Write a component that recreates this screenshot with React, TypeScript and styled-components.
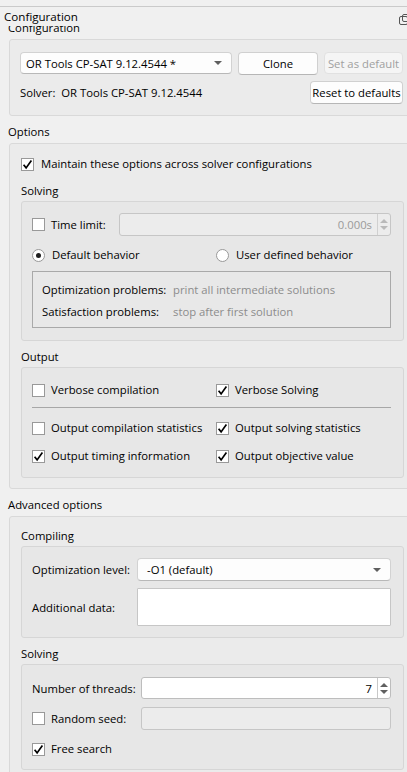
import React from 'react';
import styled, { createGlobalStyle } from 'styled-components';

const GlobalStyle = createGlobalStyle`
  html, body {
    margin: 0;
    padding: 0;
    background: #f0f0f0;
  }
  body {
    font-family: 'Open Sans', 'Noto Sans', sans-serif;
    font-size: 11.3px;
    color: #000;
    white-space: nowrap;
  }
  * {
    box-sizing: border-box;
  }
`;

const Dock = styled.div`
  width: 407px;
  height: 772px;
  overflow: hidden;
  display: flex;
  flex-direction: column;
  padding-top: 6px;
`;

const TitleBar = styled.div`
  height: 20px;
  border-top: 1px solid #cacaca;
  display: flex;
  justify-content: space-between;
  align-items: flex-start;
  padding: 2px 0 0 4px;
  line-height: 16px;
  font-size: 11.6px;
  position: relative;
  z-index: 1;
  .float_icon {
    margin-top: 5px;
    margin-right: -4px;
  }
`;

const Viewport = styled.div`
  flex: 1;
  overflow: hidden;
`;

const Content = styled.div`
  width: 420px;
  margin-top: -14px;
  padding-left: 8px;
`;

const GroupTitle = styled.div`
  height: 16px;
  line-height: 16px;
  margin: 8px 0 3px;
`;

const GroupBox = styled.div<{ $pad: string }>`
  margin-left: 1px;
  width: 407px;
  background: #ebebeb;
  border: 1px solid #d9d9d9;
  border-radius: 3px;
  padding: ${(p) => p.$pad};
  display: flex;
  flex-direction: column;
`;

const SubTitle = styled.div`
  height: 16px;
  line-height: 16px;
  margin: 8px 0 2px;
  &:first-child {
    margin-top: 0;
  }
`;

const SubBox = styled.div<{ $pad: string }>`
  background: #e7e7e7;
  border: 1px solid #d6d6d6;
  border-radius: 3px;
  padding: ${(p) => p.$pad};
  display: flex;
  flex-direction: column;
`;

const Row = styled.div<{ $gap?: number }>`
  display: flex;
  align-items: center;
  gap: ${(p) => p.$gap ?? 6}px;
`;

const ButtonRow = styled(Row)`
  height: 22px;
`;

const SolverRow = styled(Row)`
  margin-top: 7px;
  justify-content: space-between;
`;

const Combo = styled.div<{ $w?: number }>`
  width: ${(p) => (p.$w ? `${p.$w}px` : 'auto')};
  flex: ${(p) => (p.$w ? 'none' : '1')};
  height: ${(p) => (p.$w ? 22 : 23)}px;
  background: #fdfdfd;
  border: 1px solid #d2d2d2;
  border-bottom-color: #b8b8b8;
  border-radius: 4px;
  display: flex;
  align-items: center;
  justify-content: space-between;
  padding: 0 9px 0 ${(p) => (p.$w ? 5 : 9)}px;
  &::after {
    content: '';
    border-left: 4px solid transparent;
    border-right: 4px solid transparent;
    border-top: 4px solid #5f5f5f;
  }
`;

const Button = styled.div<{ $w: number; $disabled?: boolean }>`
  width: ${(p) => p.$w}px;
  height: ${(p) => (p.$disabled ? 22 : 23)}px;
  background: ${(p) => (p.$disabled ? '#f5f5f5' : '#fdfdfd')};
  color: ${(p) => (p.$disabled ? '#a0a0a0' : '#000')};
  border: 1px solid ${(p) => (p.$disabled ? '#e1e1e1' : '#d0d0d0')};
  border-bottom-color: ${(p) => (p.$disabled ? '#e1e1e1' : '#b6b6b6')};
  border-radius: 4px;
  display: flex;
  align-items: center;
  justify-content: center;
  flex: none;
`;

const CheckLabel = styled.label<{ $gap?: number }>`
  display: flex;
  align-items: center;
  gap: ${(p) => p.$gap ?? 6}px;
  height: 16px;
  line-height: 16px;
`;

const CheckSquare = styled.span`
  width: 13px;
  height: 13px;
  flex: none;
  background: #fff;
  border: 1px solid #999;
  display: flex;
  align-items: center;
  justify-content: center;
`;

const RadioCircle = styled.span<{ $on?: boolean }>`
  width: 13px;
  height: 13px;
  flex: none;
  border-radius: 50%;
  background: #fff;
  border: 1px solid #999;
  display: flex;
  align-items: center;
  justify-content: center;
  &::after {
    content: '';
    width: 5px;
    height: 5px;
    border-radius: 50%;
    background: ${(p) => (p.$on ? '#1f1f1f' : 'transparent')};
  }
`;

const SpinBox = styled.div<{ $disabled?: boolean }>`
  flex: 1;
  height: ${(p) => (p.$disabled ? 23 : 22)}px;
  background: ${(p) => (p.$disabled ? '#ececec' : '#fff')};
  border: 1px solid ${(p) => (p.$disabled ? '#c6c6c6' : '#bdbdbd')};
  border-radius: 3px;
  display: flex;
  align-items: center;
  color: ${(p) => (p.$disabled ? '#9a9a9a' : '#000')};
  .value {
    flex: 1;
    text-align: right;
    padding-right: 5px;
  }
  .arrows {
    width: 13px;
    height: 100%;
    border-left: 1px solid ${(p) => (p.$disabled ? '#d0d0d0' : '#c8c8c8')};
    display: flex;
    flex-direction: column;
    align-items: center;
    justify-content: center;
    gap: 3px;
  }
  .up,
  .down {
    border-left: 4px solid transparent;
    border-right: 4px solid transparent;
  }
  .up {
    border-bottom: 4px solid ${(p) => (p.$disabled ? '#b9b9b9' : '#606060')};
  }
  .down {
    border-top: 4px solid ${(p) => (p.$disabled ? '#b9b9b9' : '#606060')};
  }
`;

const Field = styled.div<{ $h: number; $disabled?: boolean }>`
  flex: 1;
  height: ${(p) => p.$h}px;
  background: ${(p) => (p.$disabled ? '#ececec' : '#fff')};
  border: 1px solid #c6c6c6;
  border-radius: ${(p) => (p.$disabled ? 3 : 1)}px;
`;

const TimeRow = styled(Row)`
  height: 23px;
  gap: 0;
  .check_col {
    width: 87px;
  }
`;

const RadioGrid = styled.div`
  display: grid;
  grid-template-columns: 184px 1fr;
  margin-top: 11px;
`;

const BehaviorBox = styled.div`
  margin-top: 8px;
  border: 1px solid #a9a9a9;
  background: #e8e8e8;
  padding: 10px 0 7px 9px;
  display: grid;
  grid-template-columns: 131px 1fr;
  row-gap: 6px;
  line-height: 16px;
  .hint {
    color: #8c8c8c;
  }
`;

const CheckGrid = styled.div<{ $gap: number }>`
  display: grid;
  grid-template-columns: 184px 1fr;
  row-gap: ${(p) => p.$gap}px;
`;

const Separator = styled.hr`
  border: none;
  border-top: 1px solid #a7a7a7;
  margin: 9px 0 12px;
  height: 0;
`;

const FormGrid = styled.div<{ $label: number; $gap: number }>`
  display: grid;
  grid-template-columns: ${(p) => p.$label}px 1fr;
  row-gap: ${(p) => p.$gap}px;
  align-items: center;
`;

const FreeSearchRow = styled.div`
  margin-top: 11px;
`;

const Tick = () => (
  <svg width='11' height='11' viewBox='0 0 11 11'>
    <path d='M1.6 5.8 L4.1 8.9 L9.4 1.6' fill='none' stroke='#000' strokeWidth='1.7' />
  </svg>
);

const Check = ({ label, on, gap }: { label: string; on?: boolean; gap?: number }) => (
  <CheckLabel $gap={gap}>
    <CheckSquare>{on && <Tick />}</CheckSquare>
    <span>{label}</span>
  </CheckLabel>
);

const Radio = ({ label, on }: { label: string; on?: boolean }) => (
  <CheckLabel $gap={7}>
    <RadioCircle $on={on} />
    <span>{label}</span>
  </CheckLabel>
);

const Spin = ({ value, disabled }: { value: string; disabled?: boolean }) => (
  <SpinBox $disabled={disabled}>
    <span className='value'>{value}</span>
    <span className='arrows'>
      <span className='up' />
      <span className='down' />
    </span>
  </SpinBox>
);

const App = () => {
  return (
    <>
      <GlobalStyle />
      <Dock>
        <TitleBar>
          <span>Configuration</span>
          <svg className='float_icon' width='12' height='11' viewBox='0 0 12 11'>
            <rect x='0.5' y='2.5' width='8' height='8' rx='1.5' fill='none' stroke='#555' />
            <rect x='3.5' y='0.5' width='8' height='7' rx='1.5' fill='none' stroke='#555' />
          </svg>
        </TitleBar>
        <Viewport>
          <Content>
            <GroupTitle>Configuration</GroupTitle>
            <GroupBox $pad='12px 12px 11px 10px'>
              <ButtonRow>
                <Combo $w={212}>OR Tools CP-SAT 9.12.4544 *</Combo>
                <Button $w={80}>Clone</Button>
                <Button $w={79} $disabled>
                  Set as default
                </Button>
              </ButtonRow>
              <SolverRow>
                <span>Solver:&nbsp; OR Tools CP-SAT 9.12.4544</span>
                <Button $w={93}>Reset to defaults</Button>
              </SolverRow>
            </GroupBox>

            <GroupTitle>Options</GroupTitle>
            <GroupBox $pad='12px 11px 10px 11px'>
              <Check label='Maintain these options across solver configurations' on gap={7} />
              <SubTitle style={{ marginTop: 11 }}>Solving</SubTitle>
              <SubBox $pad='11px 12px 12px 10px'>
                <TimeRow>
                  <div className='check_col'>
                    <Check label='Time limit:' />
                  </div>
                  <Spin value='0.000s' disabled />
                </TimeRow>
                <RadioGrid>
                  <Radio label='Default behavior' on />
                  <Radio label='User defined behavior' />
                </RadioGrid>
                <BehaviorBox>
                  <span>Optimization problems:</span>
                  <span className='hint'>print all intermediate solutions</span>
                  <span>Satisfaction problems:</span>
                  <span className='hint'>stop after first solution</span>
                </BehaviorBox>
              </SubBox>
              <SubTitle>Output</SubTitle>
              <SubBox $pad='14px 12px 13px 10px'>
                <CheckGrid $gap={0}>
                  <Check label='Verbose compilation' />
                  <Check label='Verbose Solving' on />
                </CheckGrid>
                <Separator />
                <CheckGrid $gap={12}>
                  <Check label='Output compilation statistics' />
                  <Check label='Output solving statistics' on />
                  <Check label='Output timing information' on />
                  <Check label='Output objective value' on />
                </CheckGrid>
              </SubBox>
            </GroupBox>

            <GroupTitle>Advanced options</GroupTitle>
            <GroupBox $pad='11px 11px 12px 11px'>
              <SubTitle>Compiling</SubTitle>
              <SubBox $pad='11px 12px 11px 10px'>
                <FormGrid $label={105} $gap={7}>
                  <span>Optimization level:</span>
                  <Combo>-O1 (default)</Combo>
                  <span>Additional data:</span>
                  <Field $h={38} />
                </FormGrid>
              </SubBox>
              <SubTitle>Solving</SubTitle>
              <SubBox $pad='12px 12px 12px 10px'>
                <FormGrid $label={109} $gap={8}>
                  <span>Number of threads:</span>
                  <Spin value='7' />
                  <Check label='Random seed:' />
                  <Field $h={23} $disabled />
                </FormGrid>
                <FreeSearchRow>
                  <Check label='Free search' on />
                </FreeSearchRow>
              </SubBox>
            </GroupBox>
          </Content>
        </Viewport>
      </Dock>
    </>
  );
};

export default App;
